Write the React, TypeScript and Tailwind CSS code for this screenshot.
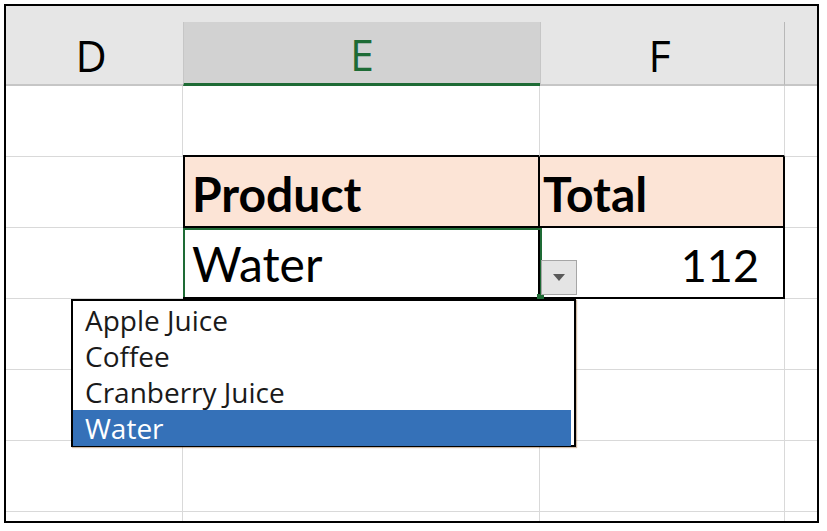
import React from 'react';

const GRID = 'border-[#d9d9d9]';

type CellProps = {
  w: string;
  className?: string;
  children?: React.ReactNode;
};

const Cell: React.FC<CellProps> = ({ w, className = '', children }) => (
  <div className={`${w} h-full shrink-0 box-border ${className}`}>{children}</div>
);

const items = ['Apple Juice', 'Coffee', 'Cranberry Juice', 'Water'];

export default function App() {
  const cellFont = { fontFamily: 'Lato, "Noto Sans", sans-serif' };

  return (
    <div className="w-[827px] h-[531px] bg-white pt-[4px] pl-[4px]">
      <div className="relative w-[815px] h-[519px] border-2 border-black overflow-hidden flex flex-col bg-white">
        {/* Column headers */}
        <div
          className="h-[80px] shrink-0 flex flex-col bg-[#e6e6e6]"
          style={{ fontFamily: '"Open Sans", "Noto Sans", sans-serif' }}
        >
          <div className="h-[16px] shrink-0" />
          <div className="h-[64px] flex">
            <Cell w="w-[177px]" className="border-b-2 border-[#c6c6c6] flex items-center justify-center pt-[4px] pr-[7px] text-[43px] leading-none text-black">
              D
            </Cell>
            <Cell w="w-[357px]" className="bg-[#d2d2d2] border-b-[3px] border-[#1e6b35] border-l border-l-[#c6c6c6] flex items-center justify-center pt-[4px] text-[43px] leading-none text-[#1e6b35]">
              E
            </Cell>
            <Cell w="w-[245px]" className="border-b-2 border-[#c6c6c6] border-l border-l-[#c6c6c6] border-r border-r-[#b8b8b8] flex items-center justify-center pt-[4px] pr-[6px] text-[43px] leading-none text-black">
              F
            </Cell>
            <Cell w="flex-1" className="border-b-2 border-[#c6c6c6]" />
          </div>
        </div>

        {/* Row 1 */}
        <div className="h-[71px] shrink-0 flex">
          <Cell w="w-[177px]" className={`border-r border-b ${GRID}`} />
          <Cell w="w-[357px]" className={`border-r border-b-2 ${GRID} border-b-black`} />
          <Cell w="w-[245px]" className={`border-r border-b-2 ${GRID} border-b-black`} />
          <Cell w="flex-1" className={`border-b ${GRID}`} />
        </div>

        {/* Row 2: table header */}
        <div className="h-[71px] shrink-0 flex" style={cellFont}>
          <Cell w="w-[177px]" className={`border-b ${GRID}`} />
          <Cell w="w-[357px]" className="bg-[#fce4d6] border-l-2 border-r-2 border-b-2 border-black flex items-end pl-[7px] pb-[8px] text-[48px] font-bold leading-none text-black">
            Product
          </Cell>
          <Cell w="w-[245px]" className="bg-[#fce4d6] border-r-2 border-b-2 border-black flex items-end pl-[3px] pb-[8px] text-[48px] font-bold leading-none text-black">
            Total
          </Cell>
          <Cell w="flex-1" className={`border-b ${GRID}`} />
        </div>

        {/* Row 3: data */}
        <div className="h-[71px] shrink-0 flex" style={cellFont}>
          <Cell w="w-[177px]" className={`border-b ${GRID}`} />
          <Cell w="w-[357px]" className="border-l-2 border-r-2 border-b-2 border-black flex items-end pl-[7px] pb-[9px] text-[48px] leading-none text-black">
            Water
          </Cell>
          <Cell w="w-[245px]" className="border-r-2 border-b-2 border-black flex items-end justify-end pr-[24px] pb-[9px] text-[45px] leading-none text-black">
            112
          </Cell>
          <Cell w="flex-1" className={`border-b ${GRID}`} />
        </div>

        {/* Empty rows */}
        {[0, 1, 2].map((i) => (
          <div key={i} className="h-[71px] shrink-0 flex">
            <Cell w="w-[177px]" className={`border-r border-b ${GRID}`} />
            <Cell w="w-[357px]" className={`border-r border-b ${GRID}`} />
            <Cell w="w-[245px]" className={`border-r border-b ${GRID}`} />
            <Cell w="flex-1" className={`border-b ${GRID}`} />
          </div>
        ))}
        <div className="flex-1 flex">
          <Cell w="w-[177px]" className={`border-r ${GRID}`} />
          <Cell w="w-[357px]" className={`border-r ${GRID}`} />
          <Cell w="w-[245px]" className={`border-r ${GRID}`} />
          <Cell w="flex-1" />
        </div>

        {/* Selected cell outline */}
        <div className="absolute left-[177px] top-[222px] w-[359px] h-[69px] border-2 border-b-0 border-[#1e6b35] pointer-events-none" />
        <div className="absolute left-[531px] top-[288px] w-[7px] h-[5px] bg-[#1e6b35]" />

        {/* Dropdown arrow button */}
        <div className="absolute left-[535px] top-[254px] w-[36px] h-[35px] bg-[#e4e4e4] border border-[#a6a6a6] flex items-center justify-center">
          <svg width="12" height="7" viewBox="0 0 12 7">
            <path d="M0 0 L12 0 L6 7 Z" fill="#595959" />
          </svg>
        </div>

        {/* Dropdown list */}
        <div
          className="absolute left-[65px] top-[293px] w-[505px] h-[148px] bg-white border-2 border-black pt-[1px] pr-[3px] shadow-[1px_1px_1px_rgba(120,60,0,0.35)]"
          style={{ fontFamily: '"Open Sans", "Noto Sans", sans-serif' }}
        >
          {items.map((item) => (
            <div
              key={item}
              className={`h-[36px] flex items-center pl-[12px] text-[28px] leading-none ${
                item === 'Water' ? 'bg-[#3571b8] text-white' : 'text-[#1a1a1a]'
              }`}
            >
              {item}
            </div>
          ))}
        </div>
      </div>
    </div>
  );
}
